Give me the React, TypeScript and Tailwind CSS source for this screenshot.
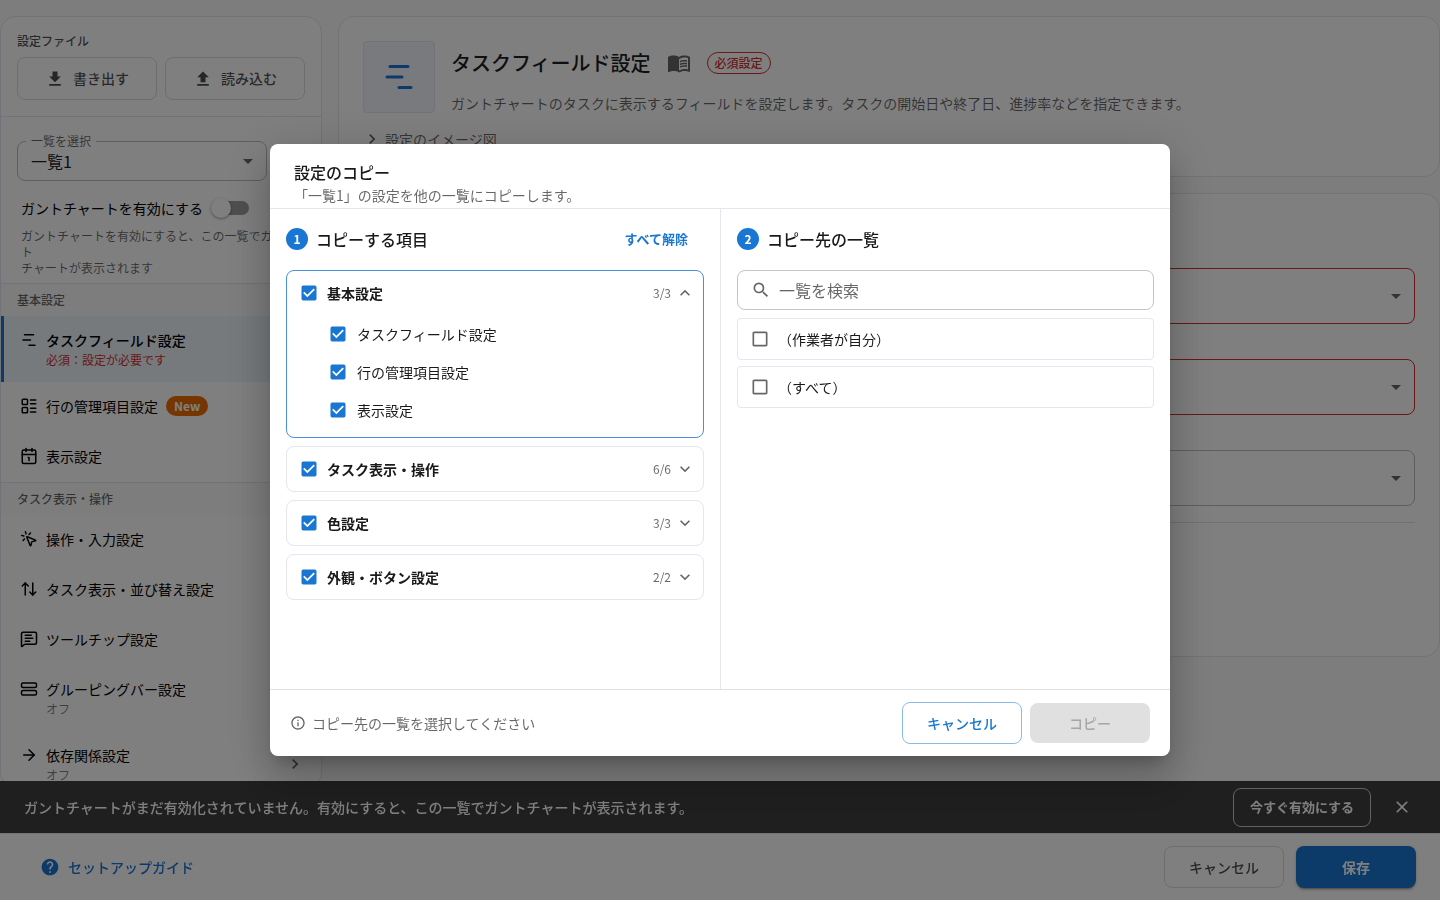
import type { ReactNode } from "react";
import {
  ArrowRight,
  ArrowUpDown,
  Calendar1,
  ChartNoAxesGantt,
  LayoutList,
  MessageSquareText,
  MousePointerClick,
  StretchHorizontal,
} from "lucide-react";
import {
  MdArrowDropDown,
  MdCheckBox,
  MdCheckBoxOutlineBlank,
  MdChevronRight,
  MdClose,
  MdDownload,
  MdExpandLess,
  MdExpandMore,
  MdHelp,
  MdInfoOutline,
  MdMenuBook,
  MdSearch,
  MdUpload,
} from "react-icons/md";

type NavItemProps = {
  icon: ReactNode;
  label: string;
  note?: string;
  active?: boolean;
  badge?: string;
};

function NavItem({ icon, label, note, active, badge }: NavItemProps) {
  return (
    <div
      className={`flex shrink-0 items-start border-l-[3px] pl-4 pr-4 pt-[14px] ${note ? "h-[66px]" : "h-[50px]"} ${
        active ? "border-[#1976d2] bg-[#ecf4fb]" : "border-transparent"
      }`}
    >
      <span className="mt-px flex h-[18px] w-[18px] shrink-0">{icon}</span>
      <div className="ml-2 flex flex-1 flex-col">
        <div className="flex h-5 items-center">
          <span className={`text-[14px] leading-5 text-black ${active ? "font-medium" : ""}`}>{label}</span>
          {badge && (
            <span className="ml-2 flex h-5 items-center rounded-full bg-[#ed6c02] px-2 text-[12px] font-bold leading-5 text-white">
              {badge}
            </span>
          )}
        </div>
        {note && (
          <span className={`text-[12px] leading-5 ${active ? "text-[#d32f2f]" : "text-black/50"}`}>{note}</span>
        )}
      </div>
      {note && <MdChevronRight className="mt-[9px] h-5 w-5 text-black/60" />}
    </div>
  );
}

function GroupHeader({ children }: { children: ReactNode }) {
  return (
    <div className="flex h-[33px] shrink-0 items-center border-t border-[#e4e6f0] bg-[#fafafa] pl-4 text-[12px] font-medium text-black/60">
      {children}
    </div>
  );
}

function Sidebar() {
  return (
    <aside className="flex h-[772px] w-[322px] shrink-0 flex-col overflow-hidden rounded-2xl border border-[#e4e6f0] bg-white">
      <div className="h-[100px] shrink-0 border-b border-[#e4e6f0] px-4 pt-[14px]">
        <p className="text-[12px] font-medium leading-5 text-black/70">設定ファイル</p>
        <div className="mt-[6px] flex gap-2">
          <button className="flex h-[43px] flex-1 items-center justify-center gap-2 rounded-lg border border-[#dcdcdc] text-[14px] font-medium text-black/70">
            <MdDownload className="h-5 w-5" />
            書き出す
          </button>
          <button className="flex h-[43px] flex-1 items-center justify-center gap-2 rounded-lg border border-[#dcdcdc] text-[14px] font-medium text-black/70">
            <MdUpload className="h-5 w-5" />
            読み込む
          </button>
        </div>
      </div>
      <div className="h-[166px] shrink-0 px-4 pt-6">
        <div className="relative flex h-10 w-[250px] items-center justify-between rounded-lg border border-[#bdbdbd] pl-[13px] pr-[6px]">
          <span className="absolute -top-[9px] left-2 bg-white px-[5px] text-[12px] leading-4 text-black/60">
            一覧を選択
          </span>
          <span className="text-[16px] leading-6 text-black/90">一覧1</span>
          <MdArrowDropDown className="h-6 w-6 text-black/60" />
        </div>
        <div className="mt-4 flex h-[22px] items-center pl-1">
          <span className="text-[14px] leading-5 text-black">ガントチャートを有効にする</span>
          <span className="relative ml-2 h-5 w-10">
            <span className="absolute left-1 top-[3px] h-[14px] w-[34px] rounded-full bg-[#9e9e9e]" />
            <span className="absolute left-0 top-0 h-5 w-5 rounded-full bg-white shadow-[0_1px_3px_rgba(0,0,0,0.4)]" />
          </span>
        </div>
        <p className="mt-[9px] w-[270px] pl-1 text-[12px] leading-4 text-black/60">
          ガントチャートを有効にすると、この一覧でガント
          <br />
          チャートが表示されます
        </p>
      </div>
      <GroupHeader>基本設定</GroupHeader>
      <NavItem icon={<ChartNoAxesGantt size={18} />} label="タスクフィールド設定" note="必須：設定が必要です" active />
      <NavItem icon={<LayoutList size={18} />} label="行の管理項目設定" badge="New" />
      <NavItem icon={<Calendar1 size={18} />} label="表示設定" />
      <GroupHeader>タスク表示・操作</GroupHeader>
      <NavItem icon={<MousePointerClick size={18} />} label="操作・入力設定" />
      <NavItem icon={<ArrowUpDown size={18} />} label="タスク表示・並び替え設定" />
      <NavItem icon={<MessageSquareText size={18} />} label="ツールチップ設定" />
      <NavItem icon={<StretchHorizontal size={18} />} label="グルーピングバー設定" note="オフ" />
      <NavItem icon={<ArrowRight size={18} />} label="依存関係設定" note="オフ" />
    </aside>
  );
}

function FieldSelect({ error }: { error?: boolean }) {
  return (
    <div
      className={`flex h-14 items-center justify-end rounded-lg border pr-[6px] ${
        error ? "border-[#d32f2f]" : "border-[#bdbdbd]"
      }`}
    >
      <MdArrowDropDown className="h-6 w-6 text-black/60" />
    </div>
  );
}

function MainContent() {
  return (
    <main className="flex flex-1 flex-col gap-4">
      <section className="h-[161px] rounded-2xl border border-[#e4e6f0] bg-white px-6 pt-6">
        <div className="flex gap-4">
          <div className="flex h-[72px] w-[72px] items-center justify-center rounded border border-[#e4e6f0] bg-[#f3f4fb] text-[#1976d2]">
            <ChartNoAxesGantt size={36} />
          </div>
          <div className="pt-[6px]">
            <div className="flex h-8 items-center">
              <h1 className="text-[20px] font-medium leading-8 text-black/90">タスクフィールド設定</h1>
              <MdMenuBook className="ml-4 h-6 w-6 text-black/60" />
              <span className="ml-4 flex h-[22px] items-center rounded-full border border-[#d32f2f] px-[7px] text-[12px] font-medium text-[#d32f2f]">
                必須設定
              </span>
            </div>
            <p className="mt-[14px] text-[14px] leading-5 text-black/60">
              ガントチャートのタスクに表示するフィールドを設定します。タスクの開始日や終了日、進捗率などを指定できます。
            </p>
          </div>
        </div>
        <div className="mt-4 flex h-5 items-center text-[14px] text-black/60">
          <MdChevronRight className="ml-[-1px] h-5 w-5" />
          <span className="ml-[3px]">設定のイメージ図</span>
        </div>
      </section>
      <section className="h-[464px] rounded-2xl border border-[#e4e6f0] bg-white px-6 pt-[74px]">
        <div className="flex flex-col gap-[35px]">
          <FieldSelect error />
          <FieldSelect error />
          <FieldSelect />
        </div>
        <hr className="mt-4 border-[#e0e0e0]" />
      </section>
    </main>
  );
}

function BottomBars() {
  return (
    <div className="fixed inset-x-0 bottom-0">
      <div className="flex h-[52px] items-center bg-[rgba(50,50,50,0.94)] pl-6 pr-7 text-white">
        <p className="flex-1 text-[14px] font-medium">
          ガントチャートがまだ有効化されていません。有効にすると、この一覧でガントチャートが表示されます。
        </p>
        <button className="flex h-[39px] w-[138px] items-center justify-center rounded-lg border border-white/70 text-[13px] font-bold">
          今すぐ有効にする
        </button>
        <MdClose className="ml-[21px] h-5 w-5" />
      </div>
      <div className="flex h-[67px] items-center border-t border-[#e4e6f0] bg-white pl-10 pr-6">
        <MdHelp className="h-5 w-5 text-[#1976d2]" />
        <span className="ml-2 flex-1 text-[14px] font-medium text-[#1976d2]">セットアップガイド</span>
        <button className="flex h-[42px] w-[120px] items-center justify-center rounded-lg border border-[#dcdcdc] text-[14px] font-medium text-black/70">
          キャンセル
        </button>
        <button className="ml-3 flex h-[42px] w-[120px] items-center justify-center rounded-lg bg-[#1976d2] text-[14px] font-bold text-white shadow-[0_3px_1px_-2px_rgba(0,0,0,0.2),0_2px_2px_0_rgba(0,0,0,0.14),0_1px_5px_0_rgba(0,0,0,0.12)]">
          保存
        </button>
      </div>
    </div>
  );
}

function StepTitle({ step, title }: { step: number; title: string }) {
  return (
    <div className="flex items-center">
      <span className="flex h-[22px] w-[22px] items-center justify-center rounded-full bg-[#1976d2] text-[12px] font-bold leading-none text-white">
        {step}
      </span>
      <h3 className="ml-2 text-[16px] font-medium leading-6 text-black/90">{title}</h3>
    </div>
  );
}

type CopyGroupProps = { title: string; count: string; items?: string[] };

function CopyGroup({ title, count, items }: CopyGroupProps) {
  return (
    <div className={`rounded-lg border ${items ? "border-[#4791db] pb-2" : "border-[#e4e6f0]"}`}>
      <div className="flex h-11 items-center pl-3 pr-2">
        <MdCheckBox className="h-5 w-5 text-[#1976d2]" />
        <span className="ml-2 flex-1 text-[14px] font-bold text-black/90">{title}</span>
        <span className="mr-1 text-[12px] text-black/60">{count}</span>
        {items ? (
          <MdExpandLess className="h-5 w-5 text-black/60" />
        ) : (
          <MdExpandMore className="h-5 w-5 text-black/60" />
        )}
      </div>
      {items?.map((item) => (
        <div key={item} className="flex h-[38px] items-center pl-[41px]">
          <MdCheckBox className="h-5 w-5 text-[#1976d2]" />
          <span className="ml-[9px] text-[14px] text-black/90">{item}</span>
        </div>
      ))}
    </div>
  );
}

function TargetRow({ label }: { label: string }) {
  return (
    <div className="flex h-[42px] items-center rounded border border-[#e4e6f0] pl-3">
      <MdCheckBoxOutlineBlank className="h-5 w-5 text-black/60" />
      <span className="ml-2 text-[14px] text-black/90">{label}</span>
    </div>
  );
}

function CopyDialog() {
  return (
    <div className="fixed inset-0 flex items-center justify-center bg-black/50">
      <div
        role="dialog"
        className="flex h-[612px] w-[900px] flex-col rounded-lg bg-white shadow-[0_11px_15px_-7px_rgba(0,0,0,0.2),0_24px_38px_3px_rgba(0,0,0,0.14),0_9px_46px_8px_rgba(0,0,0,0.12)]"
      >
        <header className="h-[65px] border-b border-[#e4e6f0] px-6 pt-4">
          <h2 className="text-[16px] font-medium leading-6 text-black/90">設定のコピー</h2>
          <p className="text-[14px] leading-[22px] text-black/60">「一覧1」の設定を他の一覧にコピーします。</p>
        </header>
        <div className="flex flex-1">
          <div className="w-[451px] border-r border-[#e4e6f0] px-4 pt-[18px]">
            <div className="flex items-center justify-between pr-4">
              <StepTitle step={1} title="コピーする項目" />
              <span className="text-[13px] font-bold text-[#1976d2]">すべて解除</span>
            </div>
            <div className="mt-[19px] flex flex-col gap-2">
              <CopyGroup
                title="基本設定"
                count="3/3"
                items={["タスクフィールド設定", "行の管理項目設定", "表示設定"]}
              />
              <CopyGroup title="タスク表示・操作" count="6/6" />
              <CopyGroup title="色設定" count="3/3" />
              <CopyGroup title="外観・ボタン設定" count="2/2" />
            </div>
          </div>
          <div className="flex-1 px-4 pt-[18px]">
            <StepTitle step={2} title="コピー先の一覧" />
            <div className="mt-[19px] flex h-10 items-center rounded-lg border border-[#c4c4c4] pl-[13px]">
              <MdSearch className="h-5 w-5 text-black/60" />
              <span className="ml-2 text-[16px] text-black/60">一覧を検索</span>
            </div>
            <div className="mt-2 flex flex-col gap-[6px]">
              <TargetRow label="（作業者が自分）" />
              <TargetRow label="（すべて）" />
            </div>
          </div>
        </div>
        <footer className="flex h-[67px] items-center border-t border-[#e0e0e0] pl-5 pr-5">
          <MdInfoOutline className="h-4 w-4 text-black/60" />
          <span className="ml-[6px] flex-1 text-[14px] text-black/60">コピー先の一覧を選択してください</span>
          <button className="flex h-[42px] w-[120px] items-center justify-center rounded-lg border border-[#8cbae8] text-[14px] font-medium text-[#1976d2]">
            キャンセル
          </button>
          <button className="ml-2 flex h-10 w-[120px] items-center justify-center rounded-lg bg-[#e0e0e0] text-[14px] font-medium text-[#a6a6a6]">
            コピー
          </button>
        </footer>
      </div>
    </div>
  );
}

export default function App() {
  return (
    <div
      lang="ja"
      className="h-[900px] overflow-hidden bg-[#fafafa] font-['Noto_Sans_CJK_JP',sans-serif]"
    >
      <div className="flex gap-4 pt-4">
        <Sidebar />
        <MainContent />
      </div>
      <BottomBars />
      <CopyDialog />
    </div>
  );
}
